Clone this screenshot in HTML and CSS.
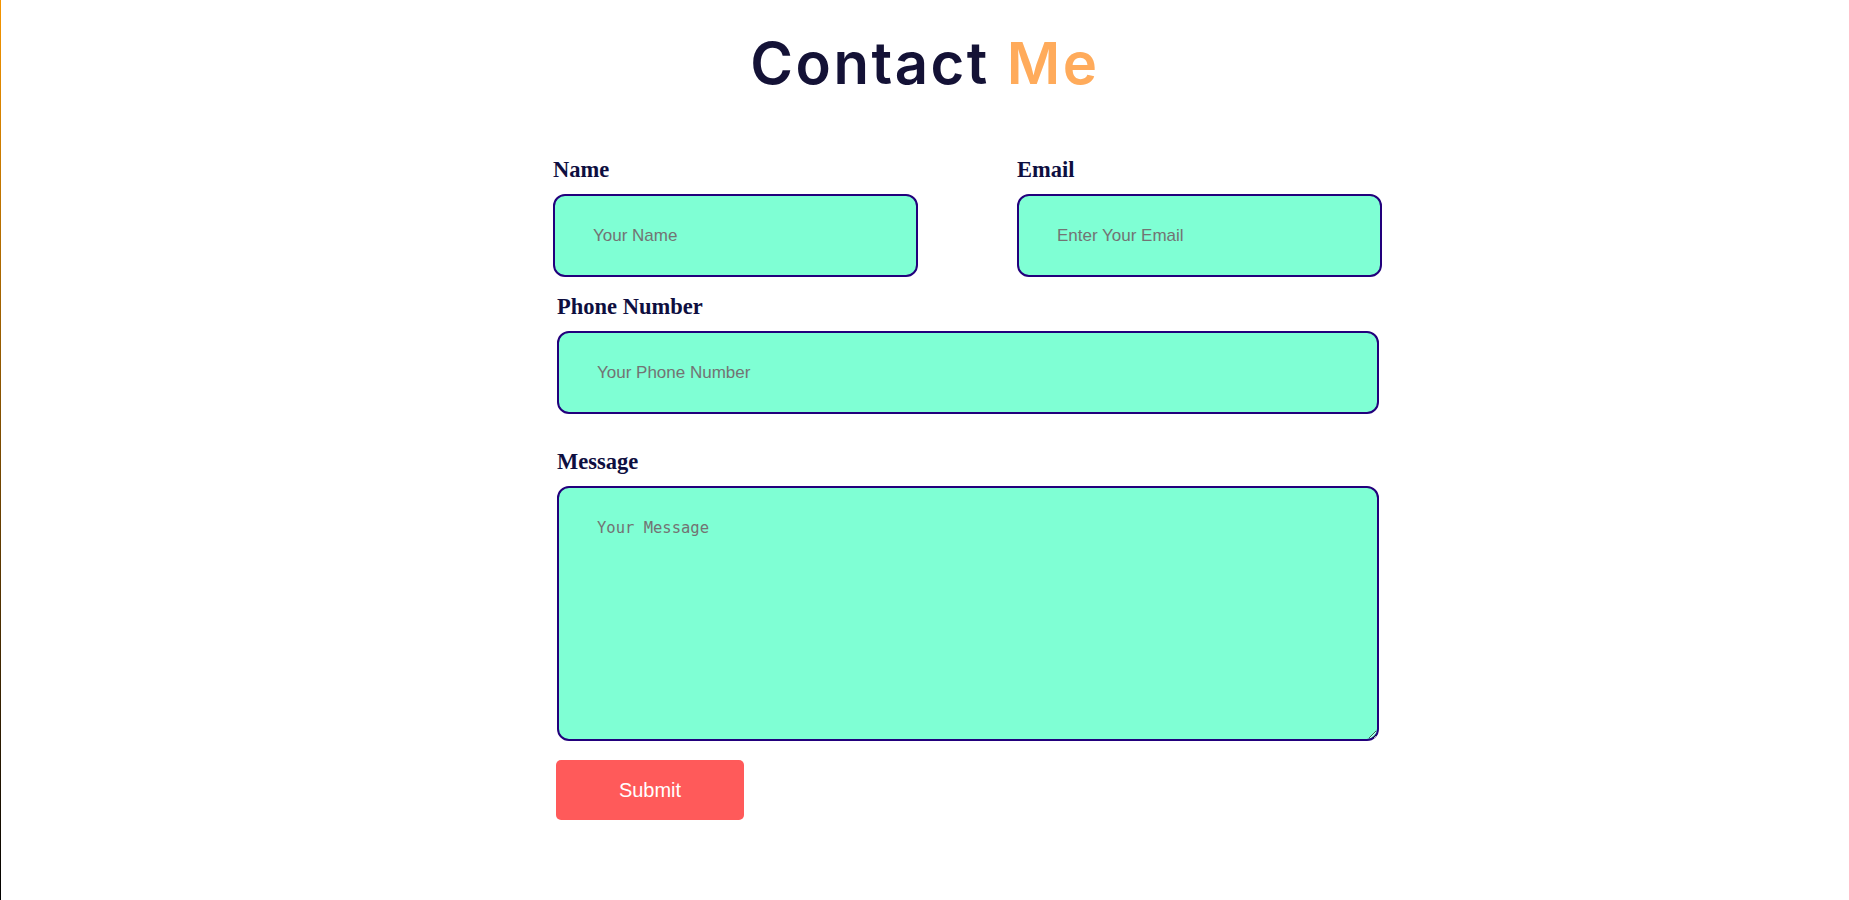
FILE: index.html
```html
<!DOCTYPE html>
<html lang="en">
<head>
<meta charset="utf-8">
<title>Contact Me</title>
<link rel="stylesheet" href="styles.css">
</head>
<body>
<main class="page">
  <h1 class="title">Contact <span class="accent">Me</span></h1>
  <form class="form" onsubmit="return false">
    <div class="row">
      <div class="field">
        <label class="label" for="name">Name</label>
        <input class="input" id="name" type="text" placeholder="Your Name">
      </div>
      <div class="field">
        <label class="label" for="email">Email</label>
        <input class="input" id="email" type="email" placeholder="Enter Your Email">
      </div>
    </div>
    <div class="field wide phone">
      <label class="label" for="phone">Phone Number</label>
      <input class="input" id="phone" type="tel" placeholder="Your Phone Number">
    </div>
    <div class="field wide message">
      <label class="label" for="msg">Message</label>
      <textarea class="textarea" id="msg" placeholder="Your Message"></textarea>
    </div>
    <button class="submit" type="submit">Submit</button>
  </form>
</main>
</body>
</html>
```

FILE: styles.css
```css
html, body {
  margin: 0;
  padding: 0;
}

body {
  min-height: 100vh;
  box-sizing: border-box;
  border-left: 1px solid #000;
  border-image: linear-gradient(to bottom, #f59500, #000000) 1;
  background: #ffffff;
  font-family: "Liberation Sans", Arial, sans-serif;
}

.page {
  display: flex;
  flex-direction: column;
}

.title {
  margin: 28px 0 0;
  align-self: center;
  font-family: Inter, "Open Sans", sans-serif;
  font-weight: 600;
  font-size: 58px;
  line-height: 70px;
  color: #141236;
  letter-spacing: 2.5px;
}

.accent {
  color: #ffab5b;
}

.form {
  width: 829px;
  margin: 58px 0 0 calc(50% - 372px);
  display: flex;
  flex-direction: column;
}

.row {
  display: flex;
  gap: 99px;
}

.field {
  display: flex;
  flex-direction: column;
  width: 365px;
}

.wide {
  width: 822px;
  margin-left: 4px;
}

.phone {
  margin-top: 16px;
}

.message {
  margin-top: 34px;
}

.label {
  font-family: "Liberation Serif", "Times New Roman", serif;
  font-weight: bold;
  font-size: 22.5px;
  line-height: 26px;
  padding-top: 1px;
  color: #0e0e40;
  margin-bottom: 11px;
}

.input,
.textarea {
  box-sizing: border-box;
  width: 100%;
  margin: 0;
  border: 2px solid #22007c;
  border-radius: 12px;
  background: #7fffd4;
  outline: none;
}

.input {
  height: 83px;
  padding: 0 38px;
  font-family: "Liberation Sans", Arial, sans-serif;
  font-size: 17px;
  color: #222;
}

.textarea {
  height: 255px;
  padding: 31px 38px;
  font-family: "DejaVu Sans Mono", monospace;
  font-size: 15.5px;
  color: #222;
  resize: vertical;
}

.input::placeholder,
.textarea::placeholder {
  color: #737373;
}

.submit {
  margin: 19px 0 0 3px;
  width: 188px;
  height: 60px;
  border: none;
  border-radius: 5px;
  background: #ff5a5a;
  color: #ffffff;
  font-family: "Liberation Sans", Arial, sans-serif;
  font-size: 20px;
  cursor: pointer;
}
```
